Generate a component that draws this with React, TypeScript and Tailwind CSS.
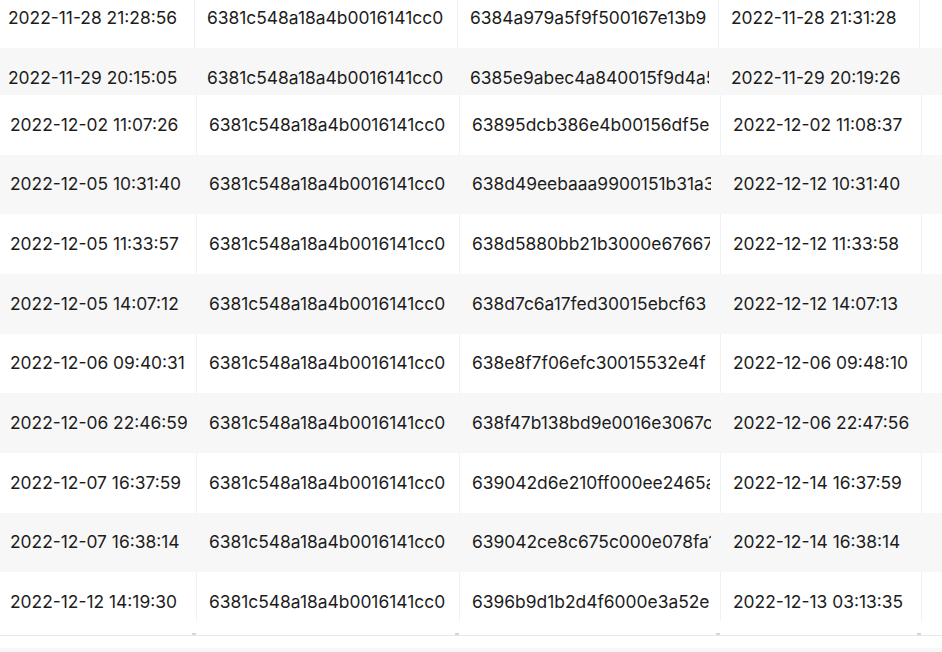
import React from 'react';

type Row = [string, string, string, string];

const topRows: Row[] = [
  ['2022-11-28 21:28:56', '6381c548a18a4b0016141cc0', '6384a979a5f9f500167e13b9', '2022-11-28 21:31:28'],
  ['2022-11-29 20:15:05', '6381c548a18a4b0016141cc0', '6385e9abec4a840015f9d4a5', '2022-11-29 20:19:26'],
];

const rows: Row[] = [
  ['2022-12-02 11:07:26', '6381c548a18a4b0016141cc0', '63895dcb386e4b00156df5eb', '2022-12-02 11:08:37'],
  ['2022-12-05 10:31:40', '6381c548a18a4b0016141cc0', '638d49eebaaa9900151b31a3', '2022-12-12 10:31:40'],
  ['2022-12-05 11:33:57', '6381c548a18a4b0016141cc0', '638d5880bb21b3000e67667a', '2022-12-12 11:33:58'],
  ['2022-12-05 14:07:12', '6381c548a18a4b0016141cc0', '638d7c6a17fed30015ebcf63', '2022-12-12 14:07:13'],
  ['2022-12-06 09:40:31', '6381c548a18a4b0016141cc0', '638e8f7f06efc30015532e4f', '2022-12-06 09:48:10'],
  ['2022-12-06 22:46:59', '6381c548a18a4b0016141cc0', '638f47b138bd9e0016e3067c', '2022-12-06 22:47:56'],
  ['2022-12-07 16:37:59', '6381c548a18a4b0016141cc0', '639042d6e210ff000ee2465a', '2022-12-14 16:37:59'],
  ['2022-12-07 16:38:14', '6381c548a18a4b0016141cc0', '639042ce8c675c000e078fa1', '2022-12-14 16:38:14'],
  ['2022-12-12 14:19:30', '6381c548a18a4b0016141cc0', '6396b9d1b2d4f6000e3a52e4', '2022-12-13 03:13:35'],
];

const widths = ['w-[197px]', 'w-[263px]', 'w-[261px]', 'w-[201px]'];

function TableRow({ row, striped, height, last }: { row: Row; striped: boolean; height: string; last?: boolean }) {
  return (
    <div className={`flex shrink-0 ${height} ${striped ? 'bg-[#f7f7f7]' : 'bg-white'}`}>
      {row.map((cell, i) => (
        <div key={i} className={`${widths[i]} shrink-0 flex flex-col`}>
          <div
            className={`flex ${i === 0 ? 'pl-[10px]' : 'pl-3'} pr-[10px] ${
              striped ? '' : 'border-r border-[#f0f0f0]'
            } ${last ? 'h-[49px] items-start pt-[20px]' : 'h-full items-center'}`}
          >
            <div className="min-w-0 flex-1 overflow-hidden whitespace-nowrap leading-5">{cell}</div>
          </div>
        </div>
      ))}
      <div className="flex-1" />
    </div>
  );
}

export default function App() {
  return (
    <div
      className="w-[942px] h-[652px] overflow-hidden bg-white flex flex-col text-[17.4px] text-[#1c1c1c]"
      style={{ fontFamily: 'Inter, "Noto Sans", sans-serif' }}
    >
      {/* fixed part, slightly offset */}
      <div className="flex flex-col -mt-[12px] -ml-[2px] shrink-0">
        {topRows.map((r, i) => (
          <TableRow key={i} row={r} striped={i % 2 === 1} height="h-[60px]" />
        ))}
      </div>

      {/* scrolled body */}
      <div className="relative flex flex-col -mt-[13px] shrink-0">
        {rows.map((r, i) => (
          <TableRow
            key={i}
            row={r}
            striped={i % 2 === 1}
            height="h-[59.67px]"
            last={i === rows.length - 1}
          />
        ))}
      </div>

      {/* footer ticks + line */}
      <div className="flex h-[3px] shrink-0">
        {widths.map((w, i) => (
          <div key={i} className={`${w} shrink-0 flex justify-end items-end`}>
            <div className="w-[4px] h-[2px] bg-[#d6d6d6] mr-[1px]" />
          </div>
        ))}
      </div>
      <div className="h-[1px] bg-[#e8e8e8] shrink-0" />
      <div className="h-[12px] bg-white shrink-0" />
      <div className="flex-1 bg-[#f7f7f7]" />
    </div>
  );
}
